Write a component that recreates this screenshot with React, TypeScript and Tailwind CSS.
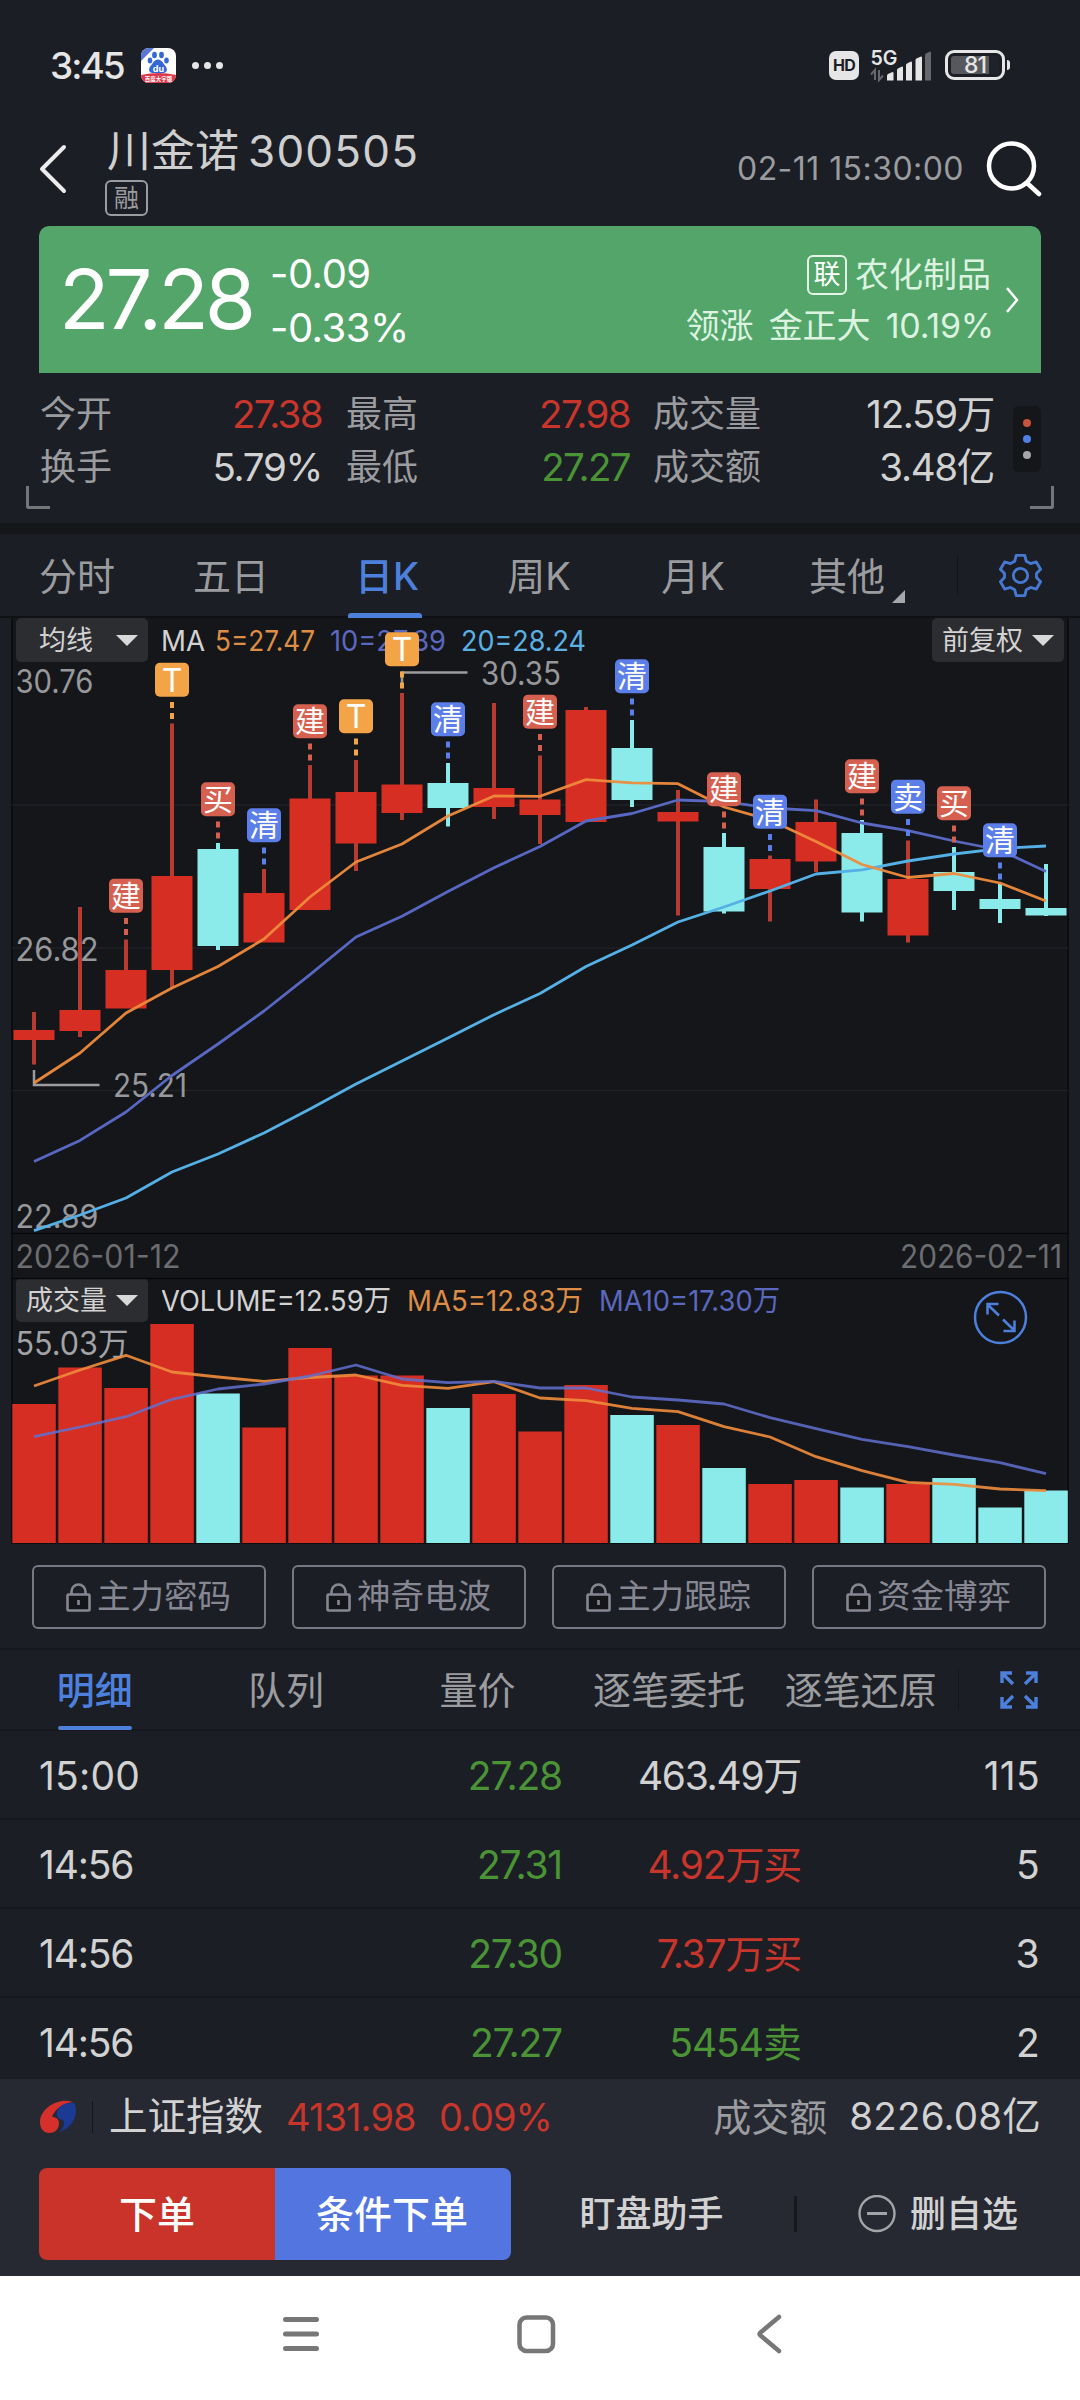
import React from "react";

type Candle = {
  up: boolean;
  top: number;
  bottom: number;
  high: number;
  low: number;
  tag?: string;
};

const X0 = 34;
const STEP = 46;
const px = (i: number) => X0 + STEP * i;

const candles: Candle[] = [
  { up: true, top: 1030, bottom: 1040, high: 1012, low: 1064.5 },
  { up: true, top: 1010, bottom: 1031, high: 907, low: 1037 },
  { up: true, top: 970, bottom: 1008.5, high: 939.5, low: 1008, tag: "建" },
  { up: true, top: 876, bottom: 970, high: 723.5, low: 987, tag: "T" },
  { up: false, top: 849, bottom: 946, high: 843, low: 950, tag: "买" },
  { up: true, top: 893, bottom: 942.5, high: 869, low: 942, tag: "清" },
  { up: true, top: 798.5, bottom: 910, high: 765, low: 909, tag: "建" },
  { up: true, top: 792, bottom: 843.5, high: 760, low: 871, tag: "T" },
  { up: true, top: 784.5, bottom: 813, high: 693, low: 820, tag: "T" },
  { up: false, top: 783, bottom: 808, high: 763, low: 826.5, tag: "清" },
  { up: true, top: 788, bottom: 807, high: 703, low: 819 },
  { up: true, top: 799.5, bottom: 815, high: 755.5, low: 844, tag: "建" },
  { up: true, top: 710, bottom: 822, high: 707, low: 821 },
  { up: false, top: 748, bottom: 800, high: 720, low: 807, tag: "清" },
  { up: true, top: 812, bottom: 821.5, high: 790, low: 915.5 },
  { up: false, top: 847, bottom: 911.5, high: 833, low: 913.5, tag: "建" },
  { up: true, top: 859, bottom: 889, high: 855.5, low: 921.5, tag: "清" },
  { up: true, top: 822, bottom: 861.5, high: 799.5, low: 872 },
  { up: false, top: 833, bottom: 912.5, high: 820, low: 921.5, tag: "建" },
  { up: true, top: 879, bottom: 935.5, high: 840.5, low: 942.5, tag: "卖" },
  { up: false, top: 872, bottom: 891, high: 847, low: 910, tag: "买" },
  { up: false, top: 899, bottom: 909, high: 884, low: 923, tag: "清" },
  { up: false, top: 908, bottom: 915.5, high: 864, low: 916 },
];

const ma5 = [1083, 1053, 1013, 988, 966.5, 939, 897, 862, 844, 816, 796, 796.3, 779.6, 782.8, 783.7, 807, 820, 841.6, 864.5, 877.5, 873.5, 883, 901];
const ma10 = [1161.6, 1140.4, 1112, 1075.5, 1044, 1011, 974.7, 937, 916.3, 891.4, 867.8, 846.5, 821, 813.5, 800, 801.6, 808, 810.6, 823, 830.6, 841, 850, 871.4];
const ma20 = [1230.6, 1215, 1198, 1172, 1154, 1133, 1109, 1084, 1061, 1038, 1014.7, 993.5, 966.5, 945, 922, 907, 891, 874, 869.8, 861, 854, 848.6, 846];

const volumes = [1404, 1367.5, 1388, 1324, 1393.5, 1427.5, 1348, 1375.5, 1375.5, 1408, 1394, 1431.5, 1385, 1415, 1425, 1468, 1484, 1480, 1487.5, 1484, 1478, 1507.5, 1490.5];
const vma5 = [1386, 1370, 1355.3, 1372, 1377, 1381.3, 1377.5, 1375, 1385.3, 1388.3, 1381.7, 1398, 1400.7, 1408.3, 1411.7, 1426.7, 1437, 1456.7, 1470.7, 1482.3, 1484.3, 1489, 1490.7];
const vma10 = [1436.7, 1427, 1416.7, 1399.3, 1389, 1384, 1376, 1365, 1379, 1382.7, 1381.3, 1388, 1388, 1397, 1400, 1404, 1417.7, 1428.7, 1439.3, 1446.7, 1455, 1462.7, 1473.7];

const line = (ys: number[]) => ys.map((y, i) => `${px(i)},${y}`).join(" ");

const tagColor: Record<string, string> = {
  T: "#f2a447",
  建: "#d6604f",
  买: "#d6604f",
  清: "#5b7ee8",
  卖: "#5b7ee8",
};

const RED = "#d62e22";
const CYAN = "#8bebea";

function StatusBar() {
  return (
    <div className="flex h-[130px] items-center justify-between pl-[50px] pr-[70px]">
      <div className="flex items-center">
        <span className="w-[75px] pt-px text-[37px] font-medium leading-none tracking-[-2px] text-[#e6e6e6]">3:45</span>
        <svg className="ml-4" width="35" height="35" viewBox="0 0 35 35">
          <defs>
            <clipPath id="app-icon">
              <rect width="35" height="35" rx="8" />
            </clipPath>
          </defs>
          <g clipPath="url(#app-icon)">
            <rect width="35" height="35" fill="#fff" />
            <path d="M0 0h13L0 13z" fill="#5a76d8" />
            <ellipse cx="13.5" cy="7" rx="2.4" ry="3.3" fill="#3468d8" />
            <ellipse cx="20.5" cy="7" rx="2.4" ry="3.3" fill="#3468d8" />
            <ellipse cx="9" cy="12.5" rx="2.3" ry="3" fill="#3468d8" />
            <ellipse cx="25.5" cy="12.5" rx="2.3" ry="3" fill="#3468d8" />
            <path d="M17 11.5c4 0 5 4 7.500 6.500 2.500 3 1.500 7-2 7h-11c-3.500 0-4.500-4-2-7 2.500-2.500 3.500-6.500 7.500-6.500z" fill="#3468d8" />
            <path d="M0 27q17.500-4 35 0v8H0z" fill="#dc3a4a" />
          </g>
          <text x="17.500" y="23.500" fontSize="9" fontWeight="700" fill="#fff" textAnchor="middle">du</text>
          <text x="17.500" y="33" fontSize="5.500" fontWeight="700" fill="#fff" textAnchor="middle">百度大字版</text>
        </svg>
        <div className="ml-4 flex gap-[5px]">
          <i className="size-[7px] rounded-full bg-[#e6e6e6]" />
          <i className="size-[7px] rounded-full bg-[#e6e6e6]" />
          <i className="size-[7px] rounded-full bg-[#e6e6e6]" />
        </div>
      </div>
      <div className="flex items-center">
        <span className="flex h-[29px] w-[30px] items-center justify-center rounded-[7px] bg-[#e6e6e6] text-[16px] font-bold leading-none tracking-[-0.8px] text-[#1b1e25]">HD</span>
        <svg className="ml-[10px]" width="64" height="36" viewBox="0 0 64 36">
          <text x="1.500" y="17.500" fontSize="20" fontWeight="600" fill="#e6e6e6" textLength="27" lengthAdjust="spacingAndGlyphs">5G</text>
          <path d="M6 33V23l-4 4.500M10 23v10l4-4.500" fill="none" stroke="#66686d" strokeWidth="2" />
          <path d="M18 33.500v-5q0-1 1-1.500l4.500-2q1 0 1 1v7.500z" fill="#e6e6e6" />
          <path d="M28 33.500V23q0-1 1-1.500l4-2q1 0 1 1v13z" fill="#e6e6e6" />
          <path d="M37 33.500V18q0-1 1-1.500l4-2q1 0 1 1v18z" fill="#e6e6e6" />
          <path d="M46.500 33.500V13q0-1 1-1.500l4.500-2q1 0 1 1v23z" fill="#e6e6e6" />
          <path d="M56 33.500V8q0-1 1-1.500l4-2q1 0 1 1v28z" fill="#66686d" />
        </svg>
        <div className="ml-[12px] flex h-[30px] w-[60px] rounded-[9px] border-[3px] border-[#e6e6e6] p-[3px]">
          <div className="flex w-full items-center justify-center rounded-[3px] bg-linear-to-r from-[#56585d] from-80% to-[#1f2229] to-80% text-[23px] font-medium leading-none tracking-[-1px] text-[#e6e6e6]">81</div>
        </div>
        <div className="ml-[2px] h-[10px] w-[3px] rounded-r-full bg-[#e6e6e6]" />
      </div>
    </div>
  );
}

function Header() {
  return (
    <div className="flex h-[96px] pl-[39px] pr-[38px]">
      <svg className="mt-[14px]" width="30" height="50" viewBox="0 0 30 50">
        <path d="M25 3 3 25l22 22" fill="none" stroke="#ececec" strokeWidth="4" strokeLinecap="round" strokeLinejoin="round" />
      </svg>
      <div className="ml-[36px] flex flex-1 flex-col items-start">
        <div className="flex h-[42px] items-center pl-[2px] leading-none text-[#cfcfcf]">
          <span className="text-[44px]">川金诺</span>
          <span className="ml-[9px] text-[44px] tracking-[1.200px]">300505</span>
        </div>
        <span className="mt-[8px] flex h-9 w-[43px] items-center justify-center rounded-[6px] border-2 border-[#9b9c9f] text-[25px] leading-none text-[#9b9c9f]">融</span>
      </div>
      <span className="mt-[23px] text-[32px] leading-none tracking-[0.450px] text-[#9b9c9f]">02-11 15:30:00</span>
      <svg className="ml-[22px] mt-[10px]" width="56" height="58" viewBox="0 0 56 58">
        <circle cx="25.500" cy="26" r="22.500" fill="none" stroke="#fff" strokeWidth="4.500" />
        <path d="m41 43 12 11" stroke="#fff" strokeWidth="4.500" strokeLinecap="round" />
      </svg>
    </div>
  );
}

function PriceCard() {
  return (
    <div className="mx-[39px] flex h-[147px] items-center rounded-t-[10px] bg-[#53a569] pl-[20px] pr-[20px] text-white">
      <span className="w-[208px] whitespace-nowrap text-[83px] leading-none tracking-[-4px]">27.28</span>
      <div className="mt-[2px] flex flex-col gap-[14px] pl-[3px] text-[40px] leading-none tracking-[-0.5px]">
        <span>-0.09</span>
        <span>-0.33%</span>
      </div>
      <div className="ml-auto flex flex-col items-end gap-[14px] text-[34px] leading-none text-[#ddf3e2]">
        <div className="-mt-[2px] flex items-center gap-[8px]">
          <span className="flex size-10 items-center justify-center rounded-[6px] border-2 border-[#e4f5e8] text-[27px] text-white">联</span>
          <span>农化制品</span>
        </div>
        <div className="-mr-[3px] flex gap-[15px] text-[34px]">
          <span>领涨</span>
          <span>金正大</span>
          <span className="tracking-[-0.200px]">10.19%</span>
        </div>
      </div>
      <svg className="ml-[12px]" width="18" height="30" viewBox="0 0 18 30">
        <path d="m4 3 10 12L4 27" fill="none" stroke="#fff" strokeWidth="2.500" />
      </svg>
    </div>
  );
}

const RedNum = "text-right text-[38.500px] tracking-[-1.600px] text-[#c8352b]";
const WhiteNum = "text-right text-[38.500px] tracking-[-1.300px] text-[#d2d2d2]";
const GreenNum = "text-right text-[38.500px] tracking-[-1.600px] text-[#4b9436]";

function Stats() {
  return (
    <div className="relative h-[150px] px-[39px] pt-[15px]">
      <div className="grid w-max grid-cols-[80px_203px_97px_211px_132px_232px] text-[36px] leading-[53px] text-[#9b9c9f]">
        <span className="pl-px">今开</span>
        <span className={RedNum}>27.38</span>
        <span className="pl-[24px]">最高</span>
        <span className={RedNum}>27.98</span>
        <span className="pl-[23px]">成交量</span>
        <span className={WhiteNum}>12.59万</span>
        <span className="pl-px">换手</span>
        <span className={WhiteNum}>5.79%</span>
        <span className="pl-[24px]">最低</span>
        <span className={GreenNum}>27.27</span>
        <span className="pl-[23px]">成交额</span>
        <span className={WhiteNum}>3.48亿</span>
      </div>
      <div className="absolute right-[39px] top-[33px] flex h-[66px] w-[28px] flex-col items-center justify-center gap-[8px] rounded-[6px] bg-[#15161a]">
        <i className="size-[8px] rounded-full bg-[#c9543c]" />
        <i className="size-[8px] rounded-full bg-[#4f7fe0]" />
        <i className="size-[8px] rounded-full bg-[#a6a7aa]" />
      </div>
      <i className="absolute bottom-[14px] left-[26px] h-[23px] w-[24px] rounded-bl-[3px] border-b-[3px] border-l-[3px] border-[#74767a]" />
      <i className="absolute bottom-[14px] right-[26px] h-[23px] w-[24px] rounded-br-[3px] border-b-[3px] border-r-[3px] border-[#74767a]" />
    </div>
  );
}

function PeriodTabs() {
  const tabs = ["分时", "五日", "日K", "周K", "月K", "其他"];
  return (
    <div className="flex h-[84px] border-b-2 border-[#101115]">
      <div className="grid w-[924px] grid-cols-6">
        {tabs.map((t) => {
          const on = t === "日K";
          return (
            <div
              key={t}
              className={on ? "relative flex items-center justify-center pl-[4px] pt-[3px] text-[38px] font-medium text-[#4d80dc]" : "relative flex items-center justify-center pt-[3px] text-[38px] text-[#9b9c9f]"}
            >
              {t}
              {on && <i className="absolute -bottom-[2px] left-10 h-[5px] w-[74px] rounded-t-[3px] bg-[#4d80dc]" />}
              {t === "其他" && (
                <svg className="absolute bottom-[13px] left-[122px]" width="13" height="13" viewBox="0 0 13 13">
                  <path d="M13 0v13H0z" fill="#a6a7aa" />
                </svg>
              )}
            </div>
          );
        })}
      </div>
      <div className="ml-[33px] h-10 w-px self-center bg-[#15161b]" />
      <svg className="ml-[40px] mt-px self-center" width="45" height="45" viewBox="0 0 47 47" fill="none" stroke="#4678d2" strokeWidth="3" strokeLinejoin="round">
        <path d="M19 2.500h9l1.500 6 4.500 2.500 6-1.700 4.500 7.700-4.300 4.500v4l4.300 4.500-4.500 7.700-6-1.700-4.500 2.500-1.500 6h-9l-1.500-6-4.500-2.500-6 1.700-4.500-7.700L6.800 25.500v-4L2.500 17 7 9.300l6 1.700 4.500-2.500z" />
        <circle cx="23.500" cy="23.500" r="7.500" />
      </svg>
    </div>
  );
}

function Drop({ label, wide }: { label: string; wide?: boolean }) {
  return (
    <div className={wide ? "flex h-[44px] w-[132px] items-center justify-between rounded-[5px] bg-[#2c2d31] pl-[10px] pr-[10px] text-[27px] leading-none text-[#d2d2d2]" : "flex h-[44px] w-[132px] items-center justify-between rounded-[5px] bg-[#2c2d31] pl-[23px] pr-[10px] text-[27px] leading-none text-[#d2d2d2]"}>
      {label}
      <svg width="22" height="11" viewBox="0 0 22 11">
        <path d="M0 0h22L11 11z" fill="#d8d8d8" />
      </svg>
    </div>
  );
}

function Label({ x, y, w, color, children, size = 32 }: { x: number; y: number; w: number; color: string; children: string; size?: number }) {
  return (
    <text x={x} y={y} fontSize={size} fill={color} textLength={w} lengthAdjust="spacingAndGlyphs">
      {children}
    </text>
  );
}

function ChartPanel() {
  return (
    <div className="relative mx-[11px] h-[926px] border-x-2 border-b border-[#0c0d10] bg-[#15161a]">
      <div className="absolute inset-x-[3px] top-0 flex h-[44px] items-center">
        <Drop label="均线" />
        <svg className="ml-[14px]" width="440" height="44" viewBox="162 618 440 44">
          <Label x={161} y={651} w={44} size={29} color="#d2d2d2">MA</Label>
          <Label x={215} y={651} w={100} size={29} color="#dd8d45">5=27.47</Label>
          <Label x={330} y={651} w={116} size={29} color="#5a68bf">10=27.89</Label>
          <Label x={461} y={651} w={125} size={29} color="#5cb0e4">20=28.24</Label>
        </svg>
        <div className="ml-auto">
          <Drop label="前复权" wide />
        </div>
      </div>
      <div className="absolute inset-x-[3px] top-[660px] flex h-[44px] items-center">
        <Drop label="成交量" wide />
        <svg className="ml-[14px]" width="640" height="44" viewBox="162 1278 640 44">
          <Label x={161} y={1310.5} w={230} size={29} color="#d2d2d2">VOLUME=12.59万</Label>
          <Label x={407} y={1310.5} w={176} size={29} color="#dd8d45">MA5=12.83万</Label>
          <Label x={599} y={1310.5} w={181} size={29} color="#5a68bf">MA10=17.30万</Label>
        </svg>
      </div>
      <svg className="relative -ml-[2px] block" width="1058" height="925" viewBox="11 618 1058 925">
        {[805, 948, 1090.5].map((y) => (
          <path key={y} d={`M12 ${y}H1068`} stroke="#212227" strokeWidth="1.500" />
        ))}
        {[1233.5, 1278.5].map((y) => (
          <path key={y} d={`M12 ${y}H1068`} stroke="#07080a" strokeWidth="1.500" />
        ))}

        <g>
          <Label x={15.5} y={692.5} w={78} color="#97989b">30.76</Label>
          <Label x={15.5} y={961} w={83} color="#97989b">26.82</Label>
          <Label x={15.5} y={1228} w={83} color="#97989b">22.89</Label>
          <Label x={15.5} y={1268} w={165} color="#6c6d71">2026-01-12</Label>
          <Label x={900} y={1268} w={162} color="#6c6d71">2026-02-11</Label>
        </g>

        {candles.map((c, i) => (
          <g key={i}>
            <rect x={px(i) - 2} y={c.high} width="4" height={c.low - c.high} fill={c.up ? "#b93a31" : CYAN} />
            <rect x={px(i) - 20.5} y={c.top} width="41" height={c.bottom - c.top} fill={c.up ? RED : CYAN} />
          </g>
        ))}

        <g>
          <Label x={113} y={1097} w={74} color="#97989b">25.21</Label>
          <Label x={481} y={685} w={80} color="#97989b">30.35</Label>
          <path d="M34 1070v15h65.500" fill="none" stroke="#9b9c9f" strokeWidth="2.500" />
          <path d="M402 687v-14.500h65.500" fill="none" stroke="#9b9c9f" strokeWidth="2.500" />
        </g>

        <polyline points={line(ma20)} fill="none" stroke="#55b0e6" strokeWidth="2.800" strokeLinejoin="round" />
        <polyline points={line(ma10)} fill="none" stroke="#5868c2" strokeWidth="2.800" strokeLinejoin="round" />
        <polyline points={line(ma5)} fill="none" stroke="#ee8b3c" strokeOpacity="0.95" strokeWidth="2.800" strokeLinejoin="round" />

        {candles.map((c, i) =>
          c.tag ? (
            <g key={i}>
              <path d={`M${px(i)} ${c.high - 21.5}v6m0 5v6`} stroke={tagColor[c.tag]} strokeWidth="4" />
              <rect x={px(i) - 17} y={c.high - 60.7} width="34" height="34" rx="5" fill={tagColor[c.tag]} />
              <text x={px(i)} y={c.tag === "T" ? c.high - 32 : c.high - 33} fontSize={c.tag === "T" ? 32 : 30} fill="#fff" textAnchor="middle">
                {c.tag}
              </text>
            </g>
          ) : null,
        )}

        {volumes.map((y, i) => (
          <rect key={i} x={px(i) - 21.7} y={y} width="43.500" height={1543 - y} fill={candles[i].up ? RED : CYAN} />
        ))}
        <Label x={15.5} y={1355} w={113} color="#a2a3a6">55.03万</Label>
        <polyline points={line(vma5)} fill="none" stroke="#f08c3c" strokeOpacity="0.9" strokeWidth="2.800" strokeLinejoin="round" />
        <polyline points={line(vma10)} fill="none" stroke="#6070d0" strokeOpacity="0.85" strokeWidth="2.800" strokeLinejoin="round" />

        <g fill="none" stroke="#4d80dc" strokeWidth="2.500">
          <circle cx="1000.500" cy="1317.500" r="25.500" />
          <path d="M999 1315.500 987.500 1304.500M987.500 1314.500v-10.500h11" />
          <path d="m1003 1319.500 11.500 11M1014.500 1320.500v10.500h-11" />
        </g>
      </svg>
    </div>
  );
}

function Locks() {
  return (
    <div className="flex h-[106px] gap-[26px] border-b-2 border-[#16181d] px-8 pt-[21px]">
      {["主力密码", "神奇电波", "主力跟踪", "资金博弈"].map((t) => (
        <div key={t} className="flex h-16 w-[234px] items-center justify-center gap-[6px] rounded-[6px] border-2 border-[#777884] pr-px text-[33.500px] leading-none text-[#868793]">
          <svg width="25" height="29" viewBox="0 0 25 29" fill="none" stroke="#868793" strokeWidth="2.600">
            <rect x="1.500" y="11.500" width="22" height="16" rx="1" fill="#15161a" />
            <path d="M5.500 11V8.500a7 7 0 0 1 14 0V11M12.500 17v5" />
          </svg>
          {t}
        </div>
      ))}
    </div>
  );
}

function DetailTabs() {
  return (
    <div className="flex h-[81px] border-b-2 border-[#16181d]">
      <div className="grid w-[958px] grid-cols-5">
        {["明细", "队列", "量价", "逐笔委托", "逐笔还原"].map((t, i) => (
          <div
            key={t}
            className={i === 0 ? "relative flex items-center justify-center whitespace-nowrap pr-[2px] pt-px text-[38px] font-medium text-[#4d80dc]" : "flex items-center justify-center whitespace-nowrap pr-[3px] pt-px text-[38px] text-[#9b9c9f]"}
          >
            {t}
            {i === 0 && <i className="absolute -bottom-px left-[58px] h-[4px] w-[74px] rounded-[2px] bg-[#4d80dc]" />}
          </div>
        ))}
      </div>
      <div className="h-10 w-px self-center bg-[#15161b]" />
      <svg className="ml-[41px] self-center" width="38" height="38" viewBox="0 0 38 38" fill="none" stroke="#4d80dc" strokeWidth="3.400">
        <path d="M13 13 2.500 2.500M2 12V2h10M25 13 35.500 2.500M26 2h10v10M13 25 2.500 35.500M2 26v10h10M25 25l10.500 10.500M36 26v10H26" />
      </svg>
    </div>
  );
}

const trades = [
  { time: "15:00", price: "27.28", vol: "463.49万", side: "w", n: "115" },
  { time: "14:56", price: "27.31", vol: "4.92万买", side: "b", n: "5" },
  { time: "14:56", price: "27.30", vol: "7.37万买", side: "b", n: "3" },
  { time: "14:56", price: "27.27", vol: "5454卖", side: "s", n: "2" },
];

const sideColor: Record<string, string> = {
  w: "text-right tracking-[-1.300px] text-[#d2d2d2]",
  b: "text-right tracking-[-1.200px] text-[#c8352b]",
  s: "text-right tracking-[-1px] text-[#4b9436]",
};

function Trades() {
  return (
    <div className="h-[348px] overflow-hidden">
      {trades.map((t, i) => (
        <div key={i} className="grid h-[89px] grid-cols-[200px_323px_239px_239px] items-center border-b-2 border-[#16181d] px-[39px] pt-px text-[39px] leading-none text-[#d2d2d2]">
          <span className={i === 0 ? "tracking-[0.200px]" : "tracking-[-1.200px]"}>{t.time}</span>
          <span className="text-right tracking-[-1.200px] text-[#4b9436]">{t.price}</span>
          <span className={sideColor[t.side]}>{t.vol}</span>
          <span className="text-right tracking-[0.300px]">{t.n}</span>
        </div>
      ))}
    </div>
  );
}

function BottomBar() {
  return (
    <div className="h-[197px] bg-[#262832]">
      <div className="flex h-[75px] items-center px-[39px] text-[38px] leading-none tracking-[-1.400px] text-[#d2d2d2]">
        <svg width="38" height="34" viewBox="0 0 38 34">
          <path d="M34 2C20-3 1 8 1 22c0 7 4 11 9 11 7 0 10-5 10-10 0-4-3-6-7-6 3-8 11-14 21-15z" fill="#d6302a" />
          <path d="M35 3c5 8 1 24-15 29 5-4 6-8 4-12-4 0-7-3-6-8C20 5 28 2 35 3z" fill="#1a3a94" />
        </svg>
        <div className="ml-[15px] h-8 w-px bg-[#15161b]" />
        <span className="ml-[16px] text-[38.500px] tracking-normal">上证指数</span>
        <span className="ml-[23px] w-[153px] tracking-[-0.900px] text-[#c8352b]">4131.98</span>
        <span className="whitespace-nowrap tracking-[-1px] text-[#c8352b]">0.09%</span>
        <span className="ml-auto tracking-normal text-[#9b9c9f]">成交额</span>
        <span className="ml-[22px] text-[38.500px] tracking-[0.200px]">8226.08亿</span>
      </div>
      <div className="mt-[14px] flex h-[92px] items-center pl-[39px] text-[36px] leading-none text-[#d2d2d2]">
        <div className="flex h-full w-[236px] items-center justify-center rounded-l-[8px] bg-[#c9332a] text-[38px] font-medium text-white">下单</div>
        <div className="flex h-full w-[236px] items-center justify-center rounded-r-[8px] bg-[#5375e0] pr-[2px] text-[38px] font-medium text-white">条件下单</div>
        <span className="w-[283px] pr-[2px] text-center font-medium">盯盘助手</span>
        <div className="h-9 w-[3px] bg-[#17181d]" />
        <svg className="ml-[61px]" width="38" height="38" viewBox="0 0 38 38" fill="none" stroke="#a3a4a8" strokeWidth="2.400">
          <circle cx="19" cy="18.500" r="17.500" />
          <path d="M9 18.500h20" strokeWidth="3" />
        </svg>
        <span className="ml-[14px] font-medium">删自选</span>
      </div>
    </div>
  );
}

function SystemNav() {
  return (
    <div className="flex h-[124px] items-center bg-white pb-[8px]">
      <svg className="ml-[282px]" width="38" height="40" viewBox="0 0 38 40" stroke="#777" strokeWidth="5" strokeLinecap="round">
        <path d="M3.500 5.500h31M3.500 20h31M3.500 34.500h31" />
      </svg>
      <svg className="ml-[196px]" width="40" height="40" viewBox="0 0 40 40" fill="none" stroke="#777" strokeWidth="4.500">
        <rect x="3.500" y="3.500" width="33.500" height="33.500" rx="7" />
      </svg>
      <svg className="ml-[199px]" width="28" height="42" viewBox="0 0 28 42" fill="none" stroke="#777" strokeWidth="4.500" strokeLinecap="round" strokeLinejoin="round">
        <path d="M24 4 5.500 19.500q-2 1.500 0 3L24 38" />
      </svg>
    </div>
  );
}

export default function App() {
  return (
    <div className="flex h-[2400px] w-[1080px] flex-col overflow-hidden bg-[#1b1e25] font-['Inter','Noto_Sans_CJK_SC',sans-serif]">
      <StatusBar />
      <Header />
      <PriceCard />
      <Stats />
      <div className="h-[11px] bg-[#15161a]" />
      <PeriodTabs />
      <ChartPanel />
      <Locks />
      <DetailTabs />
      <Trades />
      <BottomBar />
      <SystemNav />
    </div>
  );
}
